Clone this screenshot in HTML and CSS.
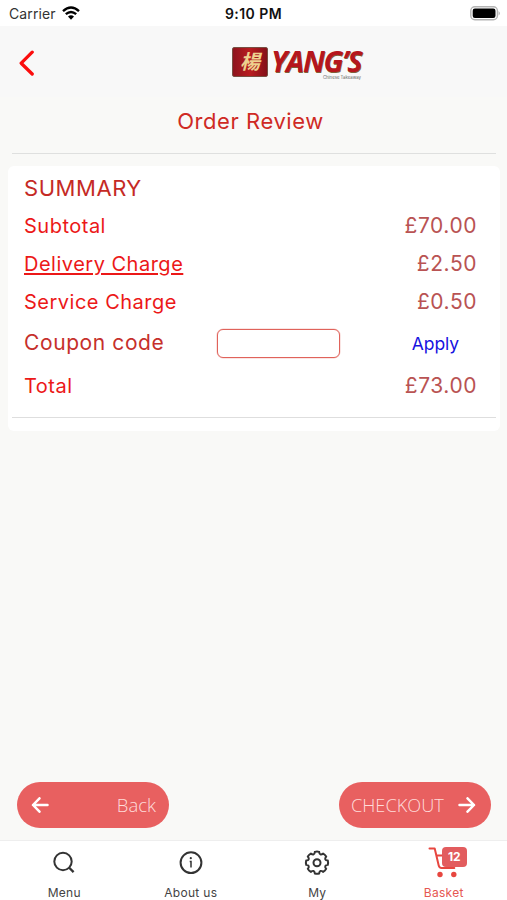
FILE: index.html
```html
<!DOCTYPE html>
<html lang="en">
<head>
<meta charset="utf-8">
<meta name="viewport" content="width=device-width, initial-scale=1">
<title>Order Review</title>
<link rel="stylesheet" href="styles.css">
</head>
<body>
<div class="status">
  <div class="carrier"><span>Carrier</span>
    <svg width="18" height="14" viewBox="0 0 18 14" fill="none" stroke="#000" stroke-width="2.4"><path d="M1 5.2Q9-2 17 5.2M3.8 8.2Q9 3.7 14.2 8.2"/><path d="M6 10.5Q9 8 12 10.5L9 13.7Z" fill="#000" stroke="none"/></svg>
  </div>
  <div class="clock">9:10 PM</div>
  <svg class="battery" width="31" height="15" viewBox="0 0 31 15"><rect x=".8" y=".8" width="26.6" height="13" rx="4" fill="#fff" stroke="#b4b4b4" stroke-width="1.4"/><rect x="2.7" y="2.6" width="22.8" height="9.4" rx="2.2"/><path d="M28.6 5Q31 7.3 28.6 9.6Z" fill="#aaa"/></svg>
</div>
<header class="header">
  <svg class="chevron" width="16" height="26" viewBox="0 0 16 26"><path d="M13.2 2.2 2.2 13.2 13.2 24" fill="none" stroke="#fb0d0d" stroke-width="3.3" stroke-linecap="round" stroke-linejoin="round"/></svg>
  <div class="logo">
    <span class="seal">楊</span>
    <div class="brand"><span class="name">YANG’S</span><span class="tagline">Chinese Takeaway</span></div>
  </div>
</header>
<main class="content">
  <h1 class="title">Order Review</h1>
  <section class="card">
    <h2 class="row summary">SUMMARY</h2>
    <div class="row subtotal"><span>Subtotal</span><span class="price">£70.00</span></div>
    <div class="row delivery"><span class="link">Delivery Charge</span><span class="price">£2.50</span></div>
    <div class="row service"><span>Service Charge</span><span class="price">£0.50</span></div>
    <div class="row coupon"><span class="label">Coupon code</span><input class="code" type="text" aria-label="Coupon code"><span class="apply">Apply</span></div>
    <div class="row total"><span>Total</span><span class="price">£73.00</span></div>
    <div class="rule"></div>
  </section>
</main>
<div class="actions">
  <div class="button"><svg width="18" height="16" viewBox="0 0 18 16"><path d="M8.5 1.3 2 8l6.500 6.700M2 8h14.500"/></svg><span class="back">Back</span></div>
  <div class="button"><span class="checkout">CHECKOUT</span><svg width="18" height="16" viewBox="0 0 18 16"><path d="M9.500 1.300 16 8l-6.500 6.700M16 8H1.500"/></svg></div>
</div>
<nav class="tabs">
  <div class="tab"><svg width="32" height="32" viewBox="0 0 32 32"><circle cx="15" cy="14.500" r="8.700"/><path d="m21.200 20.700 4.400 4.400" stroke-width="2.300"/></svg><span>Menu</span></div>
  <div class="tab"><svg width="32" height="32" viewBox="0 0 32 32"><circle cx="16" cy="15.700" r="10.400"/><path d="M14.700 14.500H16v6" stroke-width="1.500"/><circle cx="15.800" cy="11.200" r="1.100" fill="#333" stroke="none"/></svg><span class="about">About us</span></div>
  <div class="tab"><svg width="32" height="32" viewBox="0 0 32 32"><g transform="translate(16 15.700)"><path d="M10.800-2.100Q11.400 0 10.800 2.100Q6.600 2.700 9.120 6.150Q8.100 8.100 6.150 9.120Q2.700 6.600 2.100 10.800Q0 11.400-2.100 10.800Q-2.700 6.600-6.150 9.120Q-8.100 8.100-9.120 6.150Q-6.600 2.700-10.800 2.100Q-11.400 0-10.800-2.100Q-6.600-2.700-9.120-6.150Q-8.100-8.100-6.150-9.120Q-2.700-6.600-2.100-10.800Q0-11.400 2.100-10.800Q2.700-6.600 6.150-9.120Q8.100-8.100 9.120-6.150Q6.600-2.700 10.800-2.100Z"/><circle r="3.500"/></g></svg><span>My</span></div>
  <div class="tab active">
    <div class="basket"><svg width="32" height="32" viewBox="0 0 32 32"><path d="M1.500 1.600h5.200l4 17q.5 2.300 2.800 2.300h12.800M8.600 8.500H25" stroke-linecap="round" stroke-linejoin="round"/><circle cx="12" cy="27.500" r="2.700" fill="#e7463f" stroke="none"/><circle cx="25.800" cy="27.500" r="2.700" fill="#e7463f" stroke="none"/></svg><span class="badge">12</span></div>
    <span>Basket</span></div>
</nav>
</body>
</html>
```
FILE: styles.css
```css
* { box-sizing: border-box; }
body { margin: 0; width: 507px; height: 900px; display: flex; flex-direction: column; overflow: hidden; background: #f9f9f7; font-family: Inter, "Liberation Sans", sans-serif; }
.status { height: 26px; flex: none; display: grid; grid-template-columns: 1fr auto 1fr; align-items: center; padding: 1px 6px 0 9px; background: #fff; color: #111; font-size: 14px; }
.carrier { display: flex; align-items: center; gap: 6px; color: #333; letter-spacing: .1px; }
.carrier svg { margin-top: -2px; }
.clock { font-size: 14px; font-weight: 600; margin-left: -3px; letter-spacing: .45px; }
.battery { justify-self: end; }
.header { height: 71px; flex: none; display: grid; grid-template-columns: 213px 1fr; align-items: center; padding: 3px 0 0 19px; background: #f8f8f8; }
.logo { display: flex; align-items: center; }
.seal { width: 36px; height: 30px; flex: none; margin-top: -2px; border: 1px solid #785043; border-radius: 2px; background: linear-gradient(90deg, #8d141d, #b91c20 50%, #831018); color: #eed18e; font: italic 700 20px/26px "Noto Sans CJK TC", sans-serif; text-align: center; }
.brand { display: flex; flex-direction: column; width: 94px; height: 34px; margin-left: 3px; }
.name { height: 29px; color: #b5161d; font: italic 700 29px/29px "Open Sans", sans-serif; letter-spacing: -1.3px; text-shadow: .5px .5px #806039; white-space: nowrap; }
.tagline { align-self: flex-end; margin-right: 4px; color: #666; font-size: 4.300px; line-height: 5px; white-space: nowrap; }
.content { flex: 1; padding: 0 7px 0 8px; }
.title { height: 57px; margin: 0 4px 12px; padding-right: 7px; border-bottom: 1px solid #dfe0df; color: #cf2a24; font-size: 22px; font-weight: 400; line-height: 49px; letter-spacing: .57px; text-align: center; }
.card { height: 265px; padding-top: 2px; border-radius: 6px; background: #fff; color: #ec1818; font-size: 20px; line-height: 38px; letter-spacing: .5px; }
.row { display: flex; justify-content: space-between; align-items: center; height: 38px; padding: 0 23px 0 16px; }
.summary { height: 39px; margin: 0; color: #c52a25; font-size: 22px; font-weight: 400; letter-spacing: .55px; }
.link { text-decoration: underline; text-decoration-thickness: 2px; text-underline-offset: 2px; }
.price { color: #b95353; font-size: 21px; letter-spacing: .55px; }
.coupon { height: 44px; color: #c6302b; }
.coupon .label { width: 193px; font-size: 21px; letter-spacing: .6px; }
.code { width: 123px; height: 29px; margin: 0 auto 0 0; padding: 0 6px; border: 1px solid #e0635b; border-radius: 6px; outline: 0; background: #fff; box-shadow: 0 0 0 .5px #e0635b55; font: inherit; }
.apply { margin: 2px 18px 0 0; color: #1712e0; font-size: 17.500px; letter-spacing: -.1px; }
.total { height: 42px; }
.rule { height: 1px; margin: 10px 4px 0; background: #dedede; }
.actions { height: 58px; flex: none; display: flex; justify-content: space-between; padding: 0 16px 0 17px; }
.button { width: 152px; height: 46px; display: flex; justify-content: space-between; align-items: center; padding: 0 13px 0 14px; border-radius: 23px; background: #e86060; color: #ffdcda; font: 300 18.500px/44px "Open Sans", sans-serif; }
.button:last-child { padding: 0 15px 0 12px; font-size: 18.200px; }
.button svg { fill: none; stroke: #fff; stroke-width: 2.500; stroke-linecap: round; stroke-linejoin: round; }
.tabs { height: 60px; flex: none; display: grid; grid-template-columns: repeat(4, 1fr); padding-left: 1px; border-top: 1px solid #eee; background: #fff; }
.tab { display: flex; flex-direction: column; align-items: center; padding-top: 6px; color: #444; font-size: 12px; line-height: 14px; letter-spacing: .3px; }
.tab svg { flex: none; margin-bottom: 7px; fill: none; stroke: #333; stroke-width: 2; }
.tab.active { color: #e65752; }
.active svg { margin: 0; stroke: #e7463f; }
.basket { position: relative; height: 39px; }
.badge { position: absolute; left: 14px; top: 0; width: 25px; height: 20px; border-radius: 4px; background: #e25c5e; color: #fff; font-size: 12px; font-weight: 700; line-height: 20px; text-align: center; letter-spacing: 0; }
```
